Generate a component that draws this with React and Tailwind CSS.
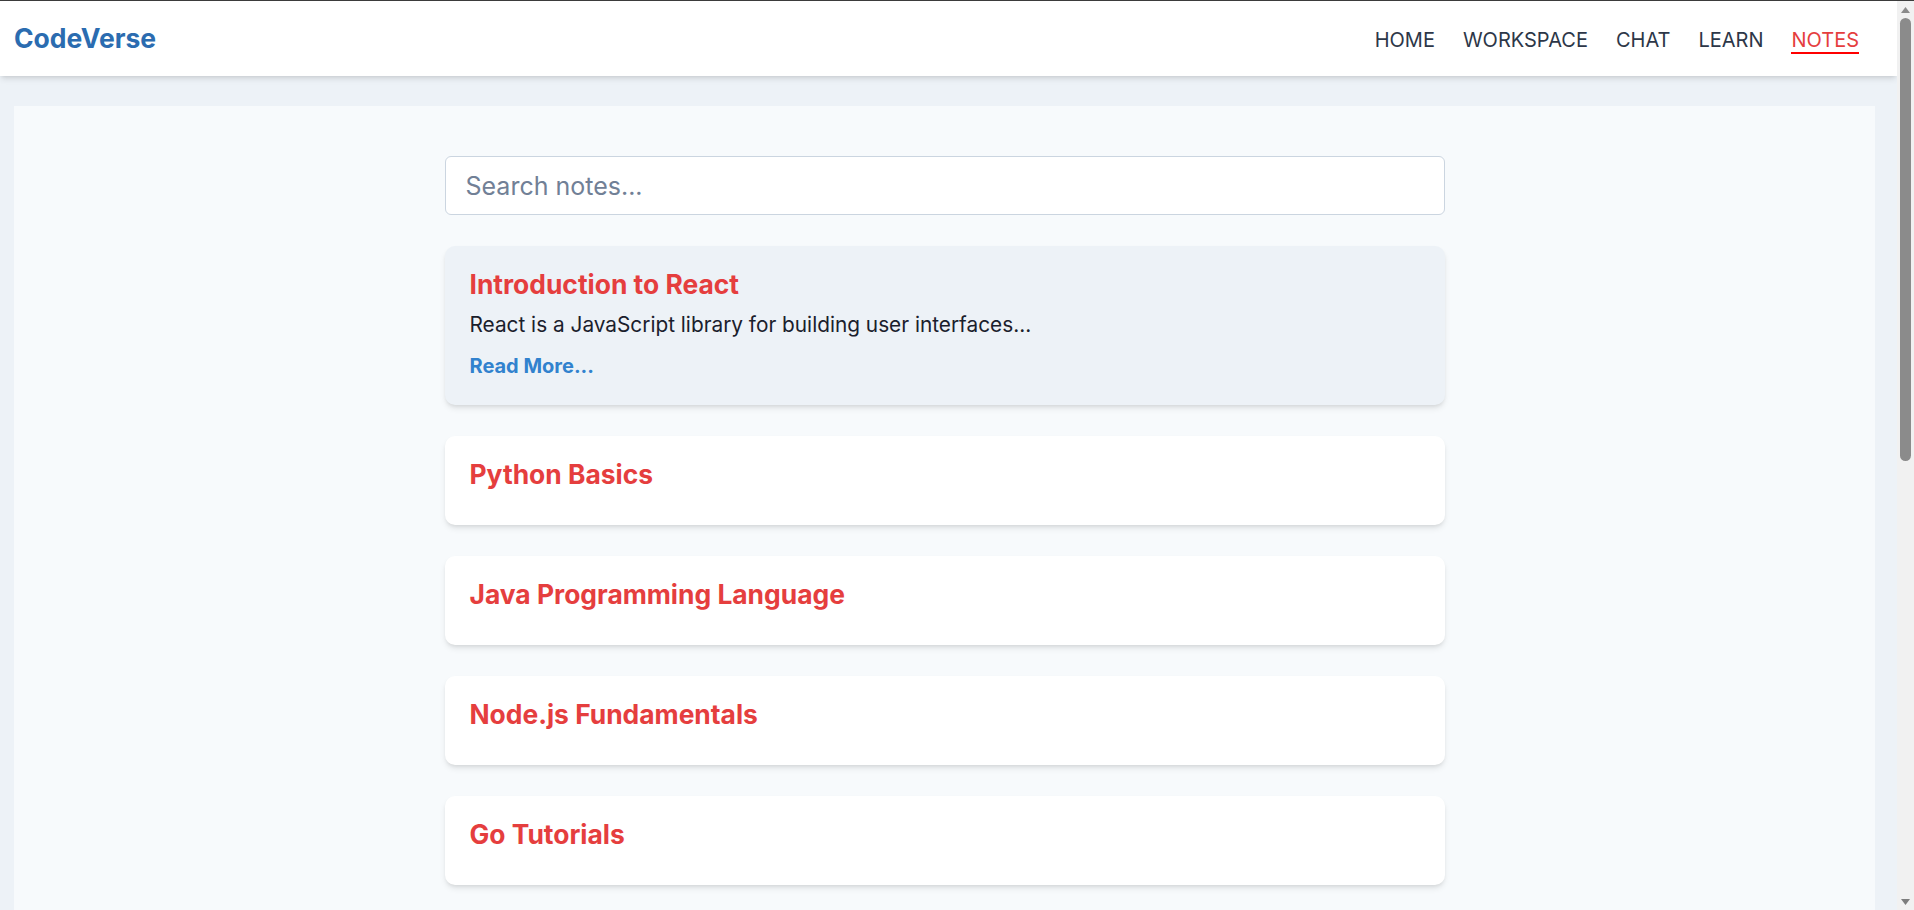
import React, { useState } from "react";

const notes = [
  {
    title: "Introduction to React",
    body: "React is a JavaScript library for building user interfaces...",
  },
  { title: "Python Basics" },
  { title: "Java Programming Language" },
  { title: "Node.js Fundamentals" },
  { title: "Go Tutorials" },
];

const links = ["HOME", "WORKSPACE", "CHAT", "LEARN", "NOTES"];

const NoteCard = ({ note, open }) => (
  <div
    className={`rounded-[10px] px-[25px] pt-[22px] pb-[24px] shadow-md ${
      open ? "bg-[#edf2f7]" : "bg-white"
    }`}
  >
    <h2 className="text-[26.4px] leading-[32px] font-bold text-[#e53e3e] mb-[11px]">
      {note.title}
    </h2>
    {open && (
      <>
        <p className="text-[20.8px] leading-[28px] text-[#1a202c]">{note.body}</p>
        <a href="#" className="block mt-3 text-[20px] leading-[30px] font-bold text-[#3182ce]">
          Read More...
        </a>
      </>
    )}
  </div>
);

// window scrollbar as seen in the screenshot
const Scrollbar = () => (
  <div className="sticky top-0 w-[17px] h-[909px] bg-[#f1f1f1] flex flex-col items-center justify-between">
    <div className="h-[17px] flex items-center justify-center">
      <svg width="9" height="6" viewBox="0 0 9 6">
        <path d="M4.5 0 L9 6 L0 6 Z" fill="#8b8b8b" />
      </svg>
    </div>
    <div className="w-[11px] h-[443px] rounded-full bg-[#8b8b8b] mb-auto" />
    <div className="h-[17px] flex items-center justify-center">
      <svg width="9" height="6" viewBox="0 0 9 6">
        <path d="M0 0 L9 0 L4.5 6 Z" fill="#7d7d7d" />
      </svg>
    </div>
  </div>
);

export default function App() {
  const [query, setQuery] = useState("");

  return (
    <div className="flex items-start border-t border-[#3c3c3c] bg-[#edf2f7] font-['Inter',sans-serif]">
      <div className="w-[1897px] min-h-screen pb-[14px]">
        {/* Navbar */}
        <nav className="h-[75px] bg-white shadow-md flex items-center justify-between pl-[14px] pr-[38px]">
          <span className="text-[26.5px] font-bold text-[#2b6cb0]">CodeVerse</span>
          <ul className="flex items-center gap-[28px]">
            {links.map((l) => (
              <li
                key={l}
                className={`text-[20px] leading-[24px] pt-1 border-b-2 ${
                  l === "NOTES"
                    ? "text-[#e53e3e] border-[#ff0000]"
                    : "text-[#2d3748] border-transparent"
                }`}
              >
                {l}
              </li>
            ))}
          </ul>
        </nav>

        {/* Notes */}
        <main className="mt-[30px] ml-[14px] mr-[22px] min-h-[1680px] bg-[#f7fafc] pt-[50px]">
          <div className="w-[1000px] mx-auto flex flex-col gap-[31px]">
            <input
              value={query}
              onChange={(e) => setQuery(e.target.value)}
              placeholder="Search notes..."
              className="h-[59px] w-full rounded-md border border-[#cbd5e0] bg-white px-[20px] text-[25px] text-[#2d3748] placeholder:text-[#718096] outline-none"
            />
            {notes
              .filter((n) => n.title.toLowerCase().includes(query.toLowerCase()))
              .map((n, i) => (
                <NoteCard key={n.title} note={n} open={i === 0} />
              ))}
          </div>
        </main>
      </div>
      <Scrollbar />
    </div>
  );
}
